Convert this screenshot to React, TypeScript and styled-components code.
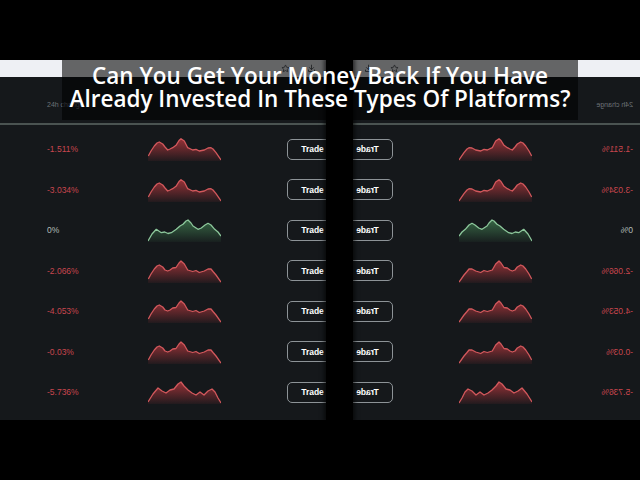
import React, { useId } from "react";
import styled, { createGlobalStyle } from "styled-components";

const GlobalStyle = createGlobalStyle`
  html, body {
    margin: 0;
    padding: 0;
    background: #000;
  }
`;

type Shape = [number, number][];

const SHAPE_A: Shape = [
  [0.3, 19], [3, 14], [6.3, 9], [9, 6], [11.3, 5], [14.7, 7], [17, 10], [19.7, 13], [22, 12],
  [24.7, 10.7], [28, 8.3], [31, 3.5], [33, 1.7], [36.3, 4], [39.7, 10.7], [44.7, 13], [48, 12.3],
  [51.3, 14], [56.3, 13], [60, 11], [63, 10.7], [65, 12], [68, 15.7], [73, 23],
];

const SHAPE_B: Shape = [
  [0.3, 20], [3, 15], [6.3, 10], [9, 7], [11.3, 6], [14.7, 8], [17, 11], [19.7, 12], [22, 11],
  [24.7, 9], [28, 8.5], [31, 4], [33, 2], [36.3, 5], [39.7, 11], [44.7, 12.5], [48, 11.5],
  [51.3, 13.5], [56.3, 12], [60, 10], [63, 10], [65, 12.5], [68, 16], [73, 23],
];

const SHAPE_C: Shape = [
  [0, 22], [5, 14], [10, 8], [14, 11], [18, 13], [22, 10], [26, 9], [30, 4], [33, 2], [36, 6],
  [40, 10], [44, 13], [48, 15], [52, 12], [56, 15], [60, 11], [64, 9], [67, 12], [70, 18], [73, 23],
];

const SHAPE_G: Shape = [
  [0, 23], [4, 16], [8.3, 11.3], [13.3, 14.7], [16.7, 14], [20, 15.5], [23.3, 14.7], [28.3, 11.3],
  [32, 8], [35, 6.3], [38, 3], [40, 2], [43, 5], [45, 8], [50, 11.3], [53.3, 10], [57, 7],
  [60, 5.3], [63, 7], [66.7, 11.3], [70, 14], [73, 18],
];

type Row = { pct: string; shape: Shape; up?: boolean; flat?: boolean };

const rows: Row[] = [
  { pct: "-1.511%", shape: SHAPE_A },
  { pct: "-3.034%", shape: SHAPE_A },
  { pct: "0%", shape: SHAPE_G, up: true, flat: true },
  { pct: "-2.066%", shape: SHAPE_B },
  { pct: "-4.053%", shape: SHAPE_B },
  { pct: "-0.03%", shape: SHAPE_B },
  { pct: "-5.736%", shape: SHAPE_C },
];

const Stage = styled.div`
  width: 640px;
  height: 480px;
  display: flex;
  flex-direction: column;
  background: #000;
  overflow: hidden;
`;

const Bar = styled.div`
  flex: 0 0 60px;
  background: #000;
`;

const Content = styled.div`
  position: relative;
  flex: 0 0 360px;
  display: flex;
  overflow: hidden;
`;

const Panel = styled.div<{ $mirrored?: boolean }>`
  flex: 0 0 340px;
  height: 360px;
  display: flex;
  flex-direction: column;
  background: #15181b;
  transform: ${(p) => (p.$mirrored ? "scaleX(-1)" : "none")};
`;

const Strip = styled.div`
  flex: 0 0 17px;
  background: #eef0f4;
  display: flex;
  justify-content: flex-end;
  align-items: center;
  gap: 17px;
  padding-right: 24px;
`;

const Header = styled.div`
  flex: 0 0 48px;
  box-sizing: border-box;
  display: flex;
  align-items: flex-end;
  padding: 0 0 15px 47px;
  border-bottom: 2px solid #4a5351;
  font-family: "Liberation Sans", Arial, sans-serif;
  font-size: 7px;
  color: #6c7277;
`;

const List = styled.div`
  padding-top: 4px;
  display: flex;
  flex-direction: column;
`;

const RowLine = styled.div`
  height: 40.5px;
  display: grid;
  grid-template-columns: 101px 73px 66px 51px;
  align-items: center;
  padding-left: 47px;
`;

const Pct = styled.span<{ $flat?: boolean }>`
  font-family: "Liberation Sans", Arial, sans-serif;
  font-size: 8.5px;
  color: ${(p) => (p.$flat ? "#b3bdb9" : "#c8464e")};
`;

const TradeButton = styled.button`
  width: 51px;
  height: 21px;
  box-sizing: border-box;
  border: 1px solid #8d9397;
  border-radius: 5px;
  background: transparent;
  color: #fff;
  font-family: "Liberation Sans", Arial, sans-serif;
  font-weight: 700;
  font-size: 8.5px;
  padding: 0;
`;

const Divider = styled.div`
  position: absolute;
  left: 326px;
  top: 0;
  bottom: 0;
  width: 27px;
  background: #000;
  box-shadow: 0 0 4px 2px rgba(0, 0, 0, 0.6);
  z-index: 1;
`;

const Caption = styled.div`
  position: absolute;
  left: 62px;
  top: 0;
  width: 516px;
  height: 60px;
  box-sizing: border-box;
  padding-top: 4px;
  background: rgba(0, 0, 0, 0.58);
  z-index: 2;
  color: #fff;
  text-align: center;
  font-family: "Open Sans", sans-serif;
  font-weight: 600;
  font-size: 22.5px;
  line-height: 23px;
  white-space: nowrap;
`;

const CaptionLine = styled.div`
  height: 23px;
`;

const Spark = ({ shape, up }: { shape: Shape; up?: boolean }) => {
  const id = useId().replace(/:/g, "");
  const line = shape.map(([x, y], i) => `${i ? "L" : "M"}${x} ${y}`).join(" ");
  const area = `${line} L73 24 L0 24 Z`;
  const stroke = up ? "#8cc79b" : "#d2585c";
  const fill = up ? "#3f7a4f" : "#b8383e";
  return (
    <svg width="73" height="24" viewBox="0 0 73 24">
      <defs>
        <linearGradient id={id} x1="0" y1="0" x2="0" y2="1">
          <stop offset="0" stopColor={fill} stopOpacity="0.8" />
          <stop offset="1" stopColor={fill} stopOpacity="0.08" />
        </linearGradient>
      </defs>
      <path d={area} fill={`url(#${id})`} />
      <path d={line} fill="none" stroke={stroke} strokeWidth="1.3" strokeLinejoin="round" />
    </svg>
  );
};

const StarIcon = () => (
  <svg width="9" height="9" viewBox="0 0 24 24" fill="none" stroke="#5f6368" strokeWidth="2.4" strokeLinejoin="round">
    <path d="M12 2.5l2.9 6.2 6.6.8-4.9 4.6 1.3 6.6L12 17.4l-5.9 3.3 1.3-6.6-4.9-4.6 6.6-.8z" />
  </svg>
);

const DownloadIcon = () => (
  <svg width="9" height="9" viewBox="0 0 24 24" fill="none" stroke="#5f6368" strokeWidth="2.6" strokeLinecap="round" strokeLinejoin="round">
    <path d="M12 3v12M6.5 9.5L12 15l5.5-5.5M4 16v4h16v-4" />
  </svg>
);

const MarketPanel = ({ mirrored }: { mirrored?: boolean }) => (
  <Panel $mirrored={mirrored}>
    <Strip>
      <StarIcon />
      <DownloadIcon />
    </Strip>
    <Header>24h change</Header>
    <List>
      {rows.map((r, i) => (
        <RowLine key={i}>
          <Pct $flat={r.flat}>{r.pct}</Pct>
          <Spark shape={r.shape} up={r.up} />
          <span />
          <TradeButton>Trade</TradeButton>
        </RowLine>
      ))}
    </List>
  </Panel>
);

export default function App() {
  return (
    <>
      <GlobalStyle />
      <Stage>
        <Bar />
        <Content>
          <MarketPanel />
          <MarketPanel mirrored />
          <Divider />
          <Caption>
            <CaptionLine>Can You Get Your Money Back If You Have</CaptionLine>
            <CaptionLine>Already Invested In These Types Of Platforms?</CaptionLine>
          </Caption>
        </Content>
        <Bar />
      </Stage>
    </>
  );
}
